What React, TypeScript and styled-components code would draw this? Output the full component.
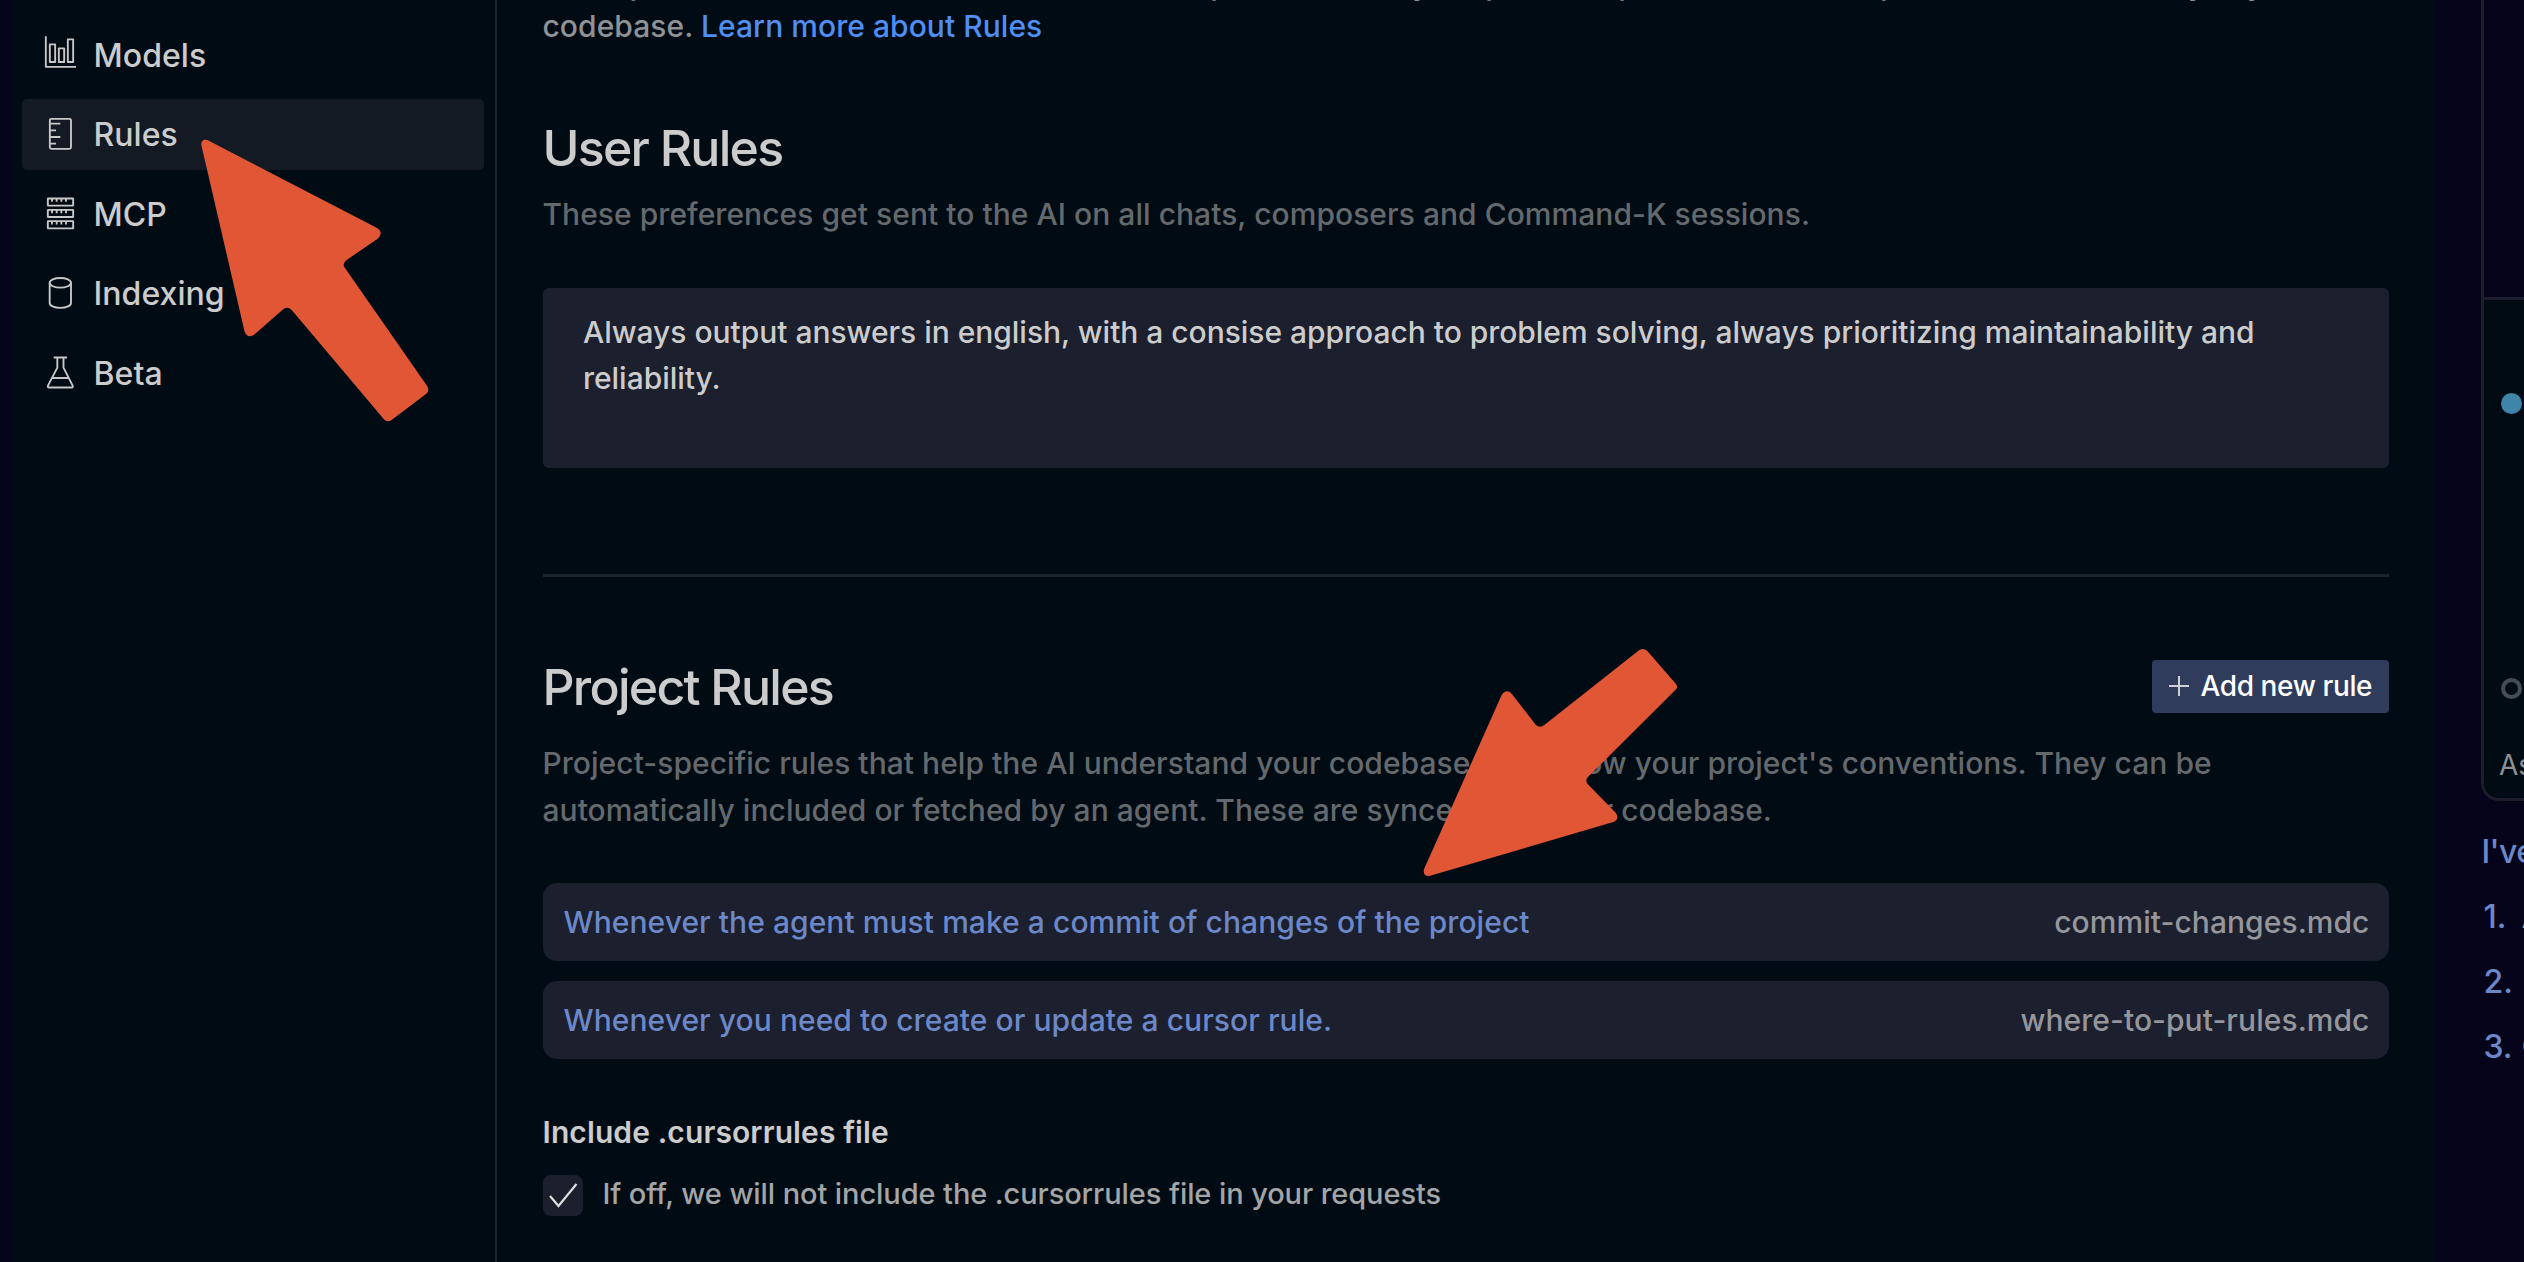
import React from "react";
import styled, { createGlobalStyle } from "styled-components";

const GlobalStyle = createGlobalStyle`
  * { box-sizing: border-box; }
  html, body { margin: 0; padding: 0; background: #05041b; overflow: hidden; }
  h2, h3, p, ol { margin: 0; padding: 0; font-weight: 400; }
`;

const Screen = styled.div`
  position: relative;
  display: flex;
  width: 2524px;
  height: 1262px;
  padding-left: 12px;
  overflow: hidden;
  background: #05041b;
  font-family: Inter, "Liberation Sans", sans-serif;
  color: #cccccc;
`;

const Modal = styled.section`
  display: flex;
  flex: none;
  width: 2423px;
  height: 100%;
  background: #010b14;
`;

/* ---------- sidebar ---------- */

const Sidebar = styled.nav`
  display: flex;
  flex-direction: column;
  flex: none;
  gap: 8.5px;
  width: 485px;
  padding: 19.3px 11px 0 10px;
  border-right: 2px solid #1d252d;
`;

const NavItem = styled.a<{ $active?: boolean }>`
  display: flex;
  align-items: center;
  gap: 15.5px;
  height: 71px;
  flex: none;
  padding: 0 22px;
  border-radius: 5px;
  background: ${(p) => (p.$active ? "#141a24" : "transparent")};
  font-size: 32px;
  font-weight: 500;
  line-height: 40px;
  letter-spacing: 0.05px;
`;

const NavIcon = styled.svg`
  width: 34px;
  height: 34px;
  flex: none;
  overflow: visible;
  fill: none;
  stroke: #c8c8c8;
  stroke-width: 5.6;
  stroke-linejoin: round;
`;

const NavLabel = styled.span`
  padding-top: 2.4px;
`;

/* ---------- main column ---------- */

const Main = styled.main`
  display: flex;
  flex-direction: column;
  flex: 1;
  min-width: 0;
  padding: 0 46px 0 45.5px;
  overflow: hidden;
`;

const Intro = styled.p`
  flex: none;
  margin-top: -37.5px;
  margin-bottom: -0.5px;
  font-size: 30px;
  font-weight: 450;
  line-height: 42px;
  letter-spacing: 0.05px;
  color: #8f9295;
`;

const Link = styled.a`
  color: #4f8ff5;
`;

const Heading = styled.h2`
  font-size: 50px;
  font-weight: 500;
  line-height: 60px;
  letter-spacing: -1.75px;
`;

const Description = styled.p<{ $top: number }>`
  flex: none;
  margin-top: ${(p) => p.$top}px;
  font-size: 30px;
  font-weight: 450;
  line-height: 47px;
  letter-spacing: 0.04px;
  color: #64696d;
`;

const UserSection = styled.section`
  display: flex;
  flex-direction: column;
  flex: none;
  margin-top: 72px;
`;

const RuleInput = styled.div`
  height: 179.5px;
  margin-top: 50px;
  padding: 20.5px 30px 0 40.5px;
  border-radius: 6px;
  background: #1b1f2e;
  font-size: 30px;
  font-weight: 450;
  line-height: 46px;
  letter-spacing: -0.03px;
`;

const Divider = styled.hr`
  flex: none;
  width: 100%;
  height: 3px;
  margin: 106.5px 0 0;
  border: 0;
  background: #1b242c;
`;

const ProjectSection = styled.section`
  display: flex;
  flex-direction: column;
  flex: none;
  margin-top: 80px;
`;

const HeadingRow = styled.header`
  display: flex;
  justify-content: space-between;
  align-items: flex-start;
`;

const AddButton = styled.button`
  display: flex;
  align-items: center;
  gap: 10.5px;
  width: 237px;
  height: 53.5px;
  margin: 2.5px 0 0;
  padding: 0 0 0 16px;
  border: 0;
  border-radius: 4px;
  background: #303c5b;
  color: #ffffff;
  font: 500 28px/34px Inter, "Liberation Sans", sans-serif;
  letter-spacing: -0.4px;
  white-space: nowrap;
`;

const PlusIcon = styled.svg`
  width: 22px;
  height: 22px;
  flex: none;
  stroke: #d0cfd6;
  stroke-width: 2;
`;

const RuleList = styled.div`
  display: flex;
  flex-direction: column;
  gap: 20.5px;
  margin-top: 49px;
`;

const RuleCard = styled.div`
  display: flex;
  align-items: center;
  justify-content: space-between;
  height: 77.5px;
  padding: 0 19.5px 0 21px;
  border-radius: 14px;
  background: #1b1f2e;
  font-size: 30px;
  font-weight: 450;
  line-height: 40px;
`;

const RuleName = styled.span`
  color: #6c88c9;
  letter-spacing: 0.06px;
`;

const RuleFile = styled.span`
  color: #95969b;
  letter-spacing: 0.06px;
`;

const IncludeSection = styled.section`
  flex: none;
  margin-top: 53px;
`;

const IncludeTitle = styled.h3`
  font-size: 30px;
  font-weight: 600;
  line-height: 40px;
  letter-spacing: 0.1px;
`;

const CheckRow = styled.label`
  display: flex;
  align-items: center;
  gap: 19.5px;
  height: 41px;
  margin-top: 23px;
  font-size: 29px;
  font-weight: 450;
  line-height: 38px;
  letter-spacing: -0.09px;
  color: #a3a5a7;
`;

const CheckBox = styled.span`
  display: flex;
  width: 40.5px;
  height: 41px;
  flex: none;
  border-radius: 8px;
  background: #1b1f2e;
`;

const CheckMark = styled.svg`
  width: 40px;
  height: 41px;
  fill: none;
  stroke: #dedede;
  stroke-width: 2.2;
`;

const CheckText = styled.span`
  margin-top: -3px;
`;

/* ---------- chat strip ---------- */

const Chat = styled.aside`
  display: flex;
  flex-direction: column;
  flex: none;
  width: 160px;
  padding-left: 46px;
`;

const ChatBox = styled.div`
  display: flex;
  flex-direction: column;
  flex: none;
  height: 801px;
  overflow: hidden;
  border: solid #1c1e2b;
  border-width: 0 0 3px 3px;
  border-radius: 0 0 0 18px;
`;

const ChatBoxHead = styled.div`
  height: 300px;
  flex: none;
  border-bottom: 3px solid #201d31;
`;

const ChatBoxBody = styled.div`
  display: flex;
  flex-direction: column;
  flex: 1;
  padding: 93px 0 0 15px;
  background: #010b14;
`;

const Dot = styled.span<{ $hollow?: boolean }>`
  flex: none;
  width: 21px;
  height: 21px;
  margin: 0 0 264px 2px;
  border: ${(p) => (p.$hollow ? "4px solid #454c52" : "0")};
  border-radius: 50%;
  background: ${(p) => (p.$hollow ? "transparent" : "#4084a8")};
  &:last-of-type { margin-bottom: 48px; }
`;

const AskLabel = styled.div`
  font-size: 28px;
  line-height: 36px;
  color: #8d9194;
  white-space: nowrap;
`;

const Message = styled.p`
  flex: none;
  margin-top: 31px;
  padding-left: 0.5px;
  font-size: 32px;
  font-weight: 500;
  line-height: 40px;
  letter-spacing: -0.6px;
  color: #6c88c9;
  white-space: nowrap;
`;

const Steps = styled.ol`
  display: flex;
  flex-direction: column;
  margin-top: 12px;
  padding-left: 2.5px;
  list-style: none;
`;

const Step = styled.li`
  display: flex;
  height: 65px;
  align-items: center;
  font-size: 32px;
  line-height: 40px;
  color: #868b95;
`;

const StepNumber = styled.span`
  width: 38px;
  flex: none;
  font-weight: 500;
  color: #6c88c9;
`;

/* ---------- annotation arrows lying over the window ---------- */

const Arrow = styled.svg<{ $x: number; $y: number; $w: number; $h: number }>`
  position: absolute;
  left: ${(p) => p.$x}px;
  top: ${(p) => p.$y}px;
  width: ${(p) => p.$w}px;
  height: ${(p) => p.$h}px;
  fill: #e15634;
`;

const NAV = [
  {
    label: "Models",
    top: 113.4,
    icon: (
      <>
        <path d="M137.5 108V200H228" />
        <rect x="149.5" y="132.5" width="16" height="53" />
        <rect x="176.5" y="144.5" width="16" height="41" />
        <rect x="203.5" y="117.5" width="16" height="68" />
      </>
    ),
  },
  {
    label: "Rules",
    top: 352,
    active: true,
    icon: (
      <>
        <rect x="149.5" y="357.5" width="63.5" height="90" rx="4.5" />
        <path d="M150 372H181M150 392H168M150 412H181M150 432H168" />
      </>
    ),
  },
  {
    label: "MCP",
    top: 590,
    icon: (
      <>
        {[594.5, 628.5, 662.5].map((y) => (
          <g key={y}>
            <rect x="143.5" y={y} width="76" height="21.5" rx="1" />
            <path d={`M156 ${y}v10M170 ${y}v10M184 ${y}v10M198 ${y}v10`} />
          </g>
        ))}
      </>
    ),
  },
  {
    label: "Indexing",
    top: 829,
    icon: (
      <>
        <ellipse cx="181" cy="849.5" rx="32" ry="14.5" />
        <path d="M149 849.5V910C149 918 162 924.5 181 924.5S213 918 213 910V849.5" />
      </>
    ),
  },
  {
    label: "Beta",
    top: 1067,
    icon: (
      <path d="M161 1071.5H201M172 1072V1102L144 1156Q142 1161.500 147 1161.500H215Q220 1161.500 218 1156L190.500 1102V1072M157 1133H205" />
    ),
  },
];

const RULES = [
  ["Whenever the agent must make a commit of changes of the project", "commit-changes.mdc"],
  ["Whenever you need to create or update a cursor rule.", "where-to-put-rules.mdc"],
];

const STEPS = ["A", "", "C"];

export default function App() {
  return (
    <Screen>
      <GlobalStyle />
      <Modal>
        <Sidebar>
          {NAV.map((item) => (
            <NavItem key={item.label} $active={item.active}>
              <NavIcon viewBox={`132 ${item.top} 102 102`}>{item.icon}</NavIcon>
              <NavLabel>{item.label}</NavLabel>
            </NavItem>
          ))}
        </Sidebar>

        <Main>
          <Intro>
            Rules provide more context to AI models to help them follow your personal preferences and operate more efficiently in your
            <br />
            codebase. <Link>Learn more about Rules</Link>
          </Intro>

          <UserSection>
            <Heading>User Rules</Heading>
            <Description $top={13}>
              These preferences get sent to the AI on all chats, composers and Command-K sessions.
            </Description>
            <RuleInput>
              Always output answers in english, with a consise approach to problem solving, always prioritizing maintainability and
              <br />
              reliability.
            </RuleInput>
          </UserSection>

          <Divider />

          <ProjectSection>
            <HeadingRow>
              <Heading>Project Rules</Heading>
              <AddButton>
                <PlusIcon viewBox="0 0 22 22">
                  <path d="M11 1V21M1 11H21" />
                </PlusIcon>
                Add new rule
              </AddButton>
            </HeadingRow>
            <Description $top={23}>
              Project-specific rules that help the AI understand your codebase and follow your project's conventions. They can be
              <br />
              automatically included or fetched by an agent. These are synced with your codebase.
            </Description>
            <RuleList>
              {RULES.map(([name, file]) => (
                <RuleCard key={file}>
                  <RuleName>{name}</RuleName>
                  <RuleFile>{file}</RuleFile>
                </RuleCard>
              ))}
            </RuleList>
          </ProjectSection>

          <IncludeSection>
            <IncludeTitle>Include .cursorrules file</IncludeTitle>
            <CheckRow>
              <CheckBox>
                <CheckMark viewBox="0 0 40 41">
                  <path d="M7 21L15.500 31L33.500 9" />
                </CheckMark>
              </CheckBox>
              <CheckText>If off, we will not include the .cursorrules file in your requests</CheckText>
            </CheckRow>
          </IncludeSection>
        </Main>
      </Modal>

      <Chat>
        <ChatBox>
          <ChatBoxHead />
          <ChatBoxBody>
            <Dot />
            <Dot $hollow />
            <AskLabel>As</AskLabel>
          </ChatBoxBody>
        </ChatBox>
        <Message>I've</Message>
        <Steps>
          {STEPS.map((word, i) => (
            <Step key={i}>
              <StepNumber>{i + 1}.</StepNumber>
              {word}
            </Step>
          ))}
        </Steps>
      </Chat>

      <Arrow $x={200} $y={136.67} $w={230} $h={286.67} viewBox="600 410 690 860">
        <path d="M604 434Q603 414 622 419L1130 682Q1153 697 1133 715L1040 779Q1025 790 1035 803L1282 1158Q1289 1171 1279 1180L1174 1260Q1163 1267 1153 1258L877 931Q863 915 848 928L764 1002Q744 1016 734 995Z" />
      </Arrow>
      <Arrow $x={1420} $y={645} $w={260} $h={233.33} viewBox="30 15 780 700">
        <path d="M42 688Q38 709 58 708L610 546Q630 537 617 518L533 432Q525 421 533 412L797 149Q805 141 798 132L714 35Q702 21 687 31L402 256Q389 265 377 254L305 161Q289 145 275 165Z" />
      </Arrow>
    </Screen>
  );
}
